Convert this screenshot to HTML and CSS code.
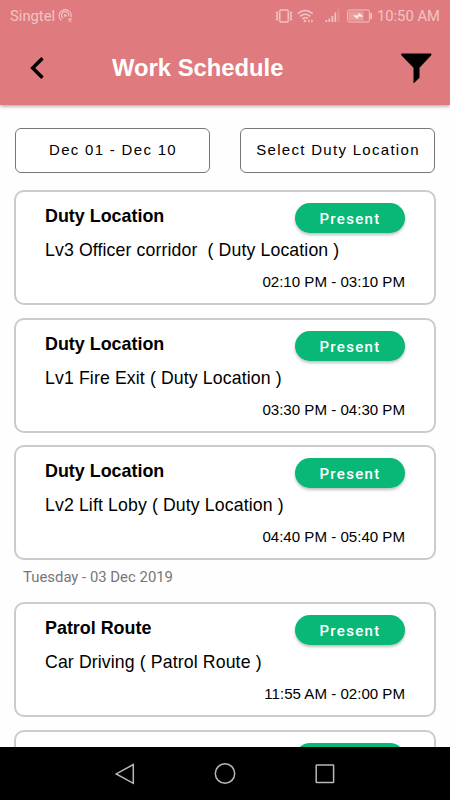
FILE: index.html
```html
<!DOCTYPE html>
<html lang="en">
<head>
  <meta charset="UTF-8">
  <meta name="viewport" content="width=device-width, initial-scale=1.0">
  <title>Work Schedule</title>
  <link rel="stylesheet" href="styles.css">
</head>
<body>
  <div class="screen">
    <header class="header">
      <div class="status-bar">
        <span class="carrier">Singtel</span>
        <svg class="hotspot-icon" width="15" height="14" viewBox="0 0 15 14" fill="none" stroke="currentColor">
          <path d="M3.500 11.500A6 6 0 1 1 13 8M5.200 9.300A3.600 3.600 0 1 1 10.500 7.500M10.500 9.500l3 3M13.500 9.500l-3 3" stroke-width="1.200"/>
          <circle cx="7.200" cy="6.600" r="1.400" fill="currentColor" stroke="none"/>
        </svg>
        <div class="status-icons">
          <svg width="18" height="14" viewBox="0 0 18 14" fill="none" stroke="currentColor">
            <rect x="4.800" y="1" width="8.400" height="12" rx="1" stroke-width="1.400"/>
            <path d="M2.800 2.500l-1.300 1.500 1.300 1.500-1.300 1.500 1.300 1.500-1.300 1.500 1.300 1.500M15.200 2.500l1.300 1.500-1.300 1.500 1.300 1.500-1.300 1.500 1.300 1.500-1.300 1.500" stroke-width="1.400"/>
          </svg>
          <svg class="wifi-icon" width="17" height="14" viewBox="0 0 17 14" fill="none" stroke="currentColor">
            <path d="M.7 4.600Q8.200-1.400 15.700 4.600M3 7.400Q8.200 3.200 13.400 7.400M5.300 10Q8.200 7.700 11 9.700" stroke-width="1.500"/>
            <path d="M6.200 12l1.700-1.600L9.600 12l-1.700 1.600zM10.600 12l2-1.700v3.400zM16.300 12l-2-1.700v3.400z" fill="currentColor" stroke="none"/>
          </svg>
          <svg class="signal-icon" width="15" height="14" viewBox="0 0 15 14" fill="currentColor">
            <path d="M.5 11h1.700v2H.5zM3.500 9.500h1.700V13H3.500zM6.500 7h1.700v6H6.500zM9.500 3.500h1.700V13H9.500z"/>
            <path d="M12.700 0h1.600v13h-1.600z" opacity=".35"/>
          </svg>
          <svg class="battery-icon" width="26" height="14" viewBox="0 0 26 14">
            <rect x=".7" y="1" width="21.600" height="12" rx="1.500" fill="none" stroke="currentColor"/>
            <path d="M2 2.500h14.500v9H2z" fill="currentColor" opacity=".5"/>
            <path d="M23.300 4h1.700v6h-1.700z" fill="currentColor"/>
            <path d="M6.500 6.500l4.500.3 1-2.600L16 7.500l-4.700-.3-1 2.600z" fill="#fff" stroke="#fff" stroke-width=".4" opacity=".85"/>
          </svg>
        </div>
        <span class="clock">10:50 AM</span>
      </div>
      <div class="title-bar">
        <svg class="back-icon" width="14" height="24" viewBox="0 0 14 24" fill="none" stroke="#000" stroke-width="3.500">
          <path d="M12.500 2.200L2.700 12l9.800 9.800"/>
        </svg>
        <h1>Work Schedule</h1>
        <svg class="filter-icon" width="31" height="31" viewBox="0 0 31 31">
          <path d="M.3.500h30v1.700L18.500 14.800v10L12.500 30.500V14.800L.3 2.200z"/>
        </svg>
      </div>
    </header>

    <main class="content">
      <div class="filters">
        <button class="filter-button">Dec 01 - Dec 10</button>
        <button class="filter-button">Select Duty Location</button>
      </div>

      <div class="schedule-list">
        <div class="card">
          <div class="card-header">
            <h2>Duty Location</h2>
            <span class="status">Present</span>
          </div>
          <p class="place">Lv3 Officer corridor&nbsp; ( Duty Location )</p>
          <p class="time">02:10 PM - 03:10 PM</p>
        </div>
        <div class="card">
          <div class="card-header">
            <h2>Duty Location</h2>
            <span class="status">Present</span>
          </div>
          <p class="place">Lv1 Fire Exit ( Duty Location )</p>
          <p class="time">03:30 PM - 04:30 PM</p>
        </div>
        <div class="card">
          <div class="card-header">
            <h2>Duty Location</h2>
            <span class="status">Present</span>
          </div>
          <p class="place">Lv2 Lift Loby ( Duty Location )</p>
          <p class="time">04:40 PM - 05:40 PM</p>
        </div>
        <div class="date">Tuesday - 03 Dec 2019</div>
        <div class="card">
          <div class="card-header">
            <h2>Patrol Route</h2>
            <span class="status">Present</span>
          </div>
          <p class="place">Car Driving ( Patrol Route )</p>
          <p class="time">11:55 AM - 02:00 PM</p>
        </div>
        <!-- Next card, cut off by the navigation bar -->
        <div class="card">
          <div class="card-header">
            <span class="status"></span>
          </div>
        </div>
      </div>
    </main>

    <nav class="nav-bar">
      <svg width="22" height="22" viewBox="0 0 22 22"><path d="M19.300 1.500v18.800L2.200 10.900z"/></svg>
      <svg width="22" height="22" viewBox="0 0 22 22"><circle cx="11" cy="10.500" r="9.700"/></svg>
      <svg width="22" height="22" viewBox="0 0 22 22"><rect x="2.200" y="2" width="17.400" height="17.400" rx=".5"/></svg>
    </nav>
  </div>
</body>
</html>
```
FILE: styles.css
```css
:root {
  --primary-color: #df7b7e;
  --status-color: #f3c3c4;
  --present-color: #09b777;
  --border-color: #cbcbcb;
}

* {
  box-sizing: border-box;
}

body {
  margin: 0;
  font-family: "Liberation Sans", Arial, Helvetica, sans-serif;
  color: #000;
  background-color: #fefefe;
}

h1, h2, p {
  margin: 0;
}

svg {
  display: block;
  flex: none;
}

.screen {
  display: flex;
  flex-direction: column;
  height: 800px;
  overflow: hidden;
}

.header {
  flex: none;
  height: 105px;
  background-color: var(--primary-color);
  box-shadow: 0 1px 4px rgba(0, 0, 0, 0.4);
}

.status-bar {
  display: flex;
  align-items: center;
  height: 32px;
  padding: 0 10px;
  color: var(--status-color);
  font-family: Roboto, sans-serif;
  font-size: 14.8px;
}

.hotspot-icon {
  margin-left: 3px;
}

.status-icons {
  display: flex;
  align-items: center;
  margin-left: auto;
}

.wifi-icon {
  margin-left: 4px;
}

.signal-icon {
  margin-left: 11px;
}

.battery-icon {
  margin-left: 7px;
}

.clock {
  margin-left: 4px;
}

.title-bar {
  display: flex;
  align-items: center;
  height: 72px;
  padding: 0 18px 0 30px;
}

.title-bar h1 {
  margin-left: 68px;
  font-size: 23.8px;
  color: #fff;
}

.filter-icon {
  margin-left: auto;
}

.content {
  flex: 1;
  min-height: 0;
  padding: 23px 14px 0;
  overflow: hidden;
}

.filters {
  display: flex;
  gap: 30px;
  padding: 0 1px;
}

.filter-button {
  flex: 1;
  height: 45px;
  padding: 0 0 2px 1px;
  border: 1px solid #777;
  border-radius: 6px;
  background-color: #fff;
  font-family: inherit;
  font-size: 15px;
  letter-spacing: 1.3px;
  color: #000;
  white-space: nowrap;
}

.schedule-list {
  margin-top: 17.4px;
}

.card {
  height: 115px;
  margin-bottom: 12.5px;
  padding: 11px 29px 0;
  border: 2px solid var(--border-color);
  border-radius: 10px;
  background-color: #fff;
}

.card-header {
  display: flex;
  justify-content: space-between;
  height: 30px;
}

.card h2 {
  font-size: 17.9px;
  line-height: 26px;
}

.status {
  width: 110px;
  height: 30px;
  margin-left: auto;
  border-radius: 15px;
  background-color: var(--present-color);
  box-shadow: 0 2px 3px rgba(0, 0, 0, 0.25);
  color: #fff;
  font-family: Roboto, sans-serif;
  font-size: 15px;
  font-weight: 500;
  letter-spacing: 1.3px;
  line-height: 32px;
  text-align: center;
}

.place {
  margin-top: 6px;
  font-size: 17.7px;
  letter-spacing: 0.12px;
  line-height: 22px;
  white-space: nowrap;
}

.time {
  margin-top: 12px;
  font-size: 15.1px;
  line-height: 18px;
  text-align: right;
}

.date {
  height: 42px;
  margin-top: -12.5px;
  padding: 8px 9px 0;
  font-family: Roboto, sans-serif;
  font-size: 14.9px;
  line-height: 18px;
  color: #777;
}

.nav-bar {
  display: flex;
  flex: none;
  align-items: center;
  justify-content: center;
  gap: 78px;
  height: 53px;
  background-color: #000;
}

.nav-bar svg {
  fill: none;
  stroke: #b8b8b8;
  stroke-width: 1.5;
}
```
